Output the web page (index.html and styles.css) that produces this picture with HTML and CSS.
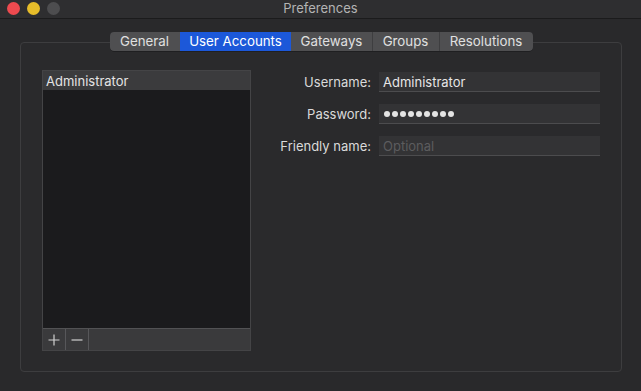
FILE: index.html
```html
<!DOCTYPE html>
<html lang="en">
<head>
<meta charset="utf-8">
<title>Preferences</title>
<link rel="stylesheet" href="styles.css">
</head>
<body>
<div class="window">
  <header class="titlebar">
    <div class="lights">
      <span class="light red"></span>
      <span class="light yellow"></span>
      <span class="light gray"></span>
    </div>
    <div class="title">Preferences</div>
  </header>
  <main class="content">
    <nav class="tabs">
      <span class="tab">General</span>
      <span class="tab active">User Accounts</span>
      <span class="tab">Gateways</span>
      <span class="tab">Groups</span>
      <span class="tab">Resolutions</span>
    </nav>
    <section class="box">
      <div class="list">
        <div class="list-body">
          <div class="list-row">Administrator</div>
        </div>
        <div class="list-footer">
          <span class="btn">
            <svg width="12" height="12" viewBox="0 0 12 12"><path d="M6 0.5V11.5M0.5 6H11.5" stroke="#d0d0d0" stroke-width="1.2" fill="none"/></svg>
          </span>
          <span class="btn">
            <svg width="12" height="12" viewBox="0 0 12 12"><path d="M0.5 6H11.5" stroke="#d0d0d0" stroke-width="1.2" fill="none"/></svg>
          </span>
        </div>
      </div>
      <div class="form">
        <label class="label">Username:</label>
        <div class="field">Administrator</div>
        <label class="label">Password:</label>
        <div class="field dots">
          <span class="dot"></span><span class="dot"></span><span class="dot"></span><span class="dot"></span><span class="dot"></span><span class="dot"></span><span class="dot"></span><span class="dot"></span><span class="dot"></span>
        </div>
        <label class="label">Friendly name:</label>
        <div class="field placeholder">Optional</div>
      </div>
    </section>
  </main>
</div>
</body>
</html>
```

FILE: styles.css
```css
* { box-sizing: border-box; }
html, body {
  margin: 0;
  padding: 0;
  background: #28282a;
}
body {
  font-family: Inter, "Liberation Sans", Arial, sans-serif;
  font-size: 13px;
  color: #dedede;
}
.window {
  width: 641px;
  height: 391px;
  background: #29292b;
  display: flex;
  flex-direction: column;
  overflow: hidden;
}
.titlebar {
  height: 19px;
  flex: none;
  background: #2e2e30;
  border-bottom: 1px solid #1b1b1c;
  display: flex;
  align-items: center;
  position: relative;
}
.lights {
  display: flex;
  gap: 7px;
  padding-left: 7px;
  margin-top: -2px;
}
.light {
  width: 13px;
  height: 13px;
  border-radius: 50%;
}
.red { background: #ed4a4f; }
.yellow { background: #e6bd2a; }
.gray { background: #4d4d4f; }
.title {
  position: absolute;
  left: 0;
  right: 0;
  top: 0;
  text-align: center;
  color: #b4b4b4;
  line-height: 17px;
  font-size: 13px;
}
.content {
  flex: 1;
  padding: 13px 19px 0 20px;
  display: flex;
  flex-direction: column;
}
.tabs {
  align-self: center;
  display: flex;
  height: 19px;
  background: #4f4f51;
  border-radius: 4px;
  overflow: hidden;
  position: relative;
  z-index: 1;
  box-shadow: 0 0.5px 0 rgba(0,0,0,0.5);
}
.tab {
  display: flex;
  align-items: center;
  justify-content: center;
  color: #e0e0e0;
  line-height: 19px;
  font-size: 13.3px;
  border-left: 1px solid #3e3e40;
}
.tab:nth-child(1) { width: 70px; border-left: none; }
.tab:nth-child(2) { width: 111px; }
.tab:nth-child(3) { width: 81px; }
.tab:nth-child(4) { width: 67px; }
.tab:nth-child(5) { width: 94px; }
.tab.active {
  background: #1c58d9;
  color: #ffffff;
  border-left-color: #1c58d9;
}
.tab.active + .tab { border-left-color: #4f4f51; }
.box {
  margin-top: -9px;
  height: 330px;
  border: 1px solid #3d3d3f;
  border-radius: 4px;
  background: #2a2a2c;
  padding: 27px 21px 0 21px;
  display: flex;
  gap: 20px;
}
.list {
  width: 209px;
  height: 281px;
  flex: none;
  border: 1px solid #444446;
  display: flex;
  flex-direction: column;
  background: #1b1b1d;
}
.list-body {
  flex: 1;
}
.list-row {
  height: 19px;
  background: #3b3b3d;
  padding-left: 3px;
  line-height: 20px;
  color: #e4e4e4;
}
.list-footer {
  height: 22px;
  flex: none;
  background: #3a3a3c;
  border-top: 1px solid #525254;
  display: flex;
}
.btn {
  width: 23px;
  display: flex;
  align-items: center;
  justify-content: center;
  border-right: 1px solid #57575a;
}
.form {
  flex: 1;
  display: grid;
  grid-template-columns: auto 221px;
  justify-content: end;
  column-gap: 8px;
  row-gap: 12px;
  align-content: start;
  padding-top: 2px;
}
.label {
  text-align: right;
  line-height: 20px;
  color: #dadada;
}
.field {
  height: 20px;
  background: #333335;
  border-bottom: 1px solid #4c4c4e;
  padding-left: 4px;
  line-height: 20px;
  color: #e6e6e6;
}
.dots {
  display: flex;
  align-items: center;
  gap: 2px;
  padding-left: 5px;
}
.dot {
  width: 6px;
  height: 6px;
  border-radius: 50%;
  background: #e4e4e4;
}
.placeholder {
  color: #5c5c5e;
}
```
